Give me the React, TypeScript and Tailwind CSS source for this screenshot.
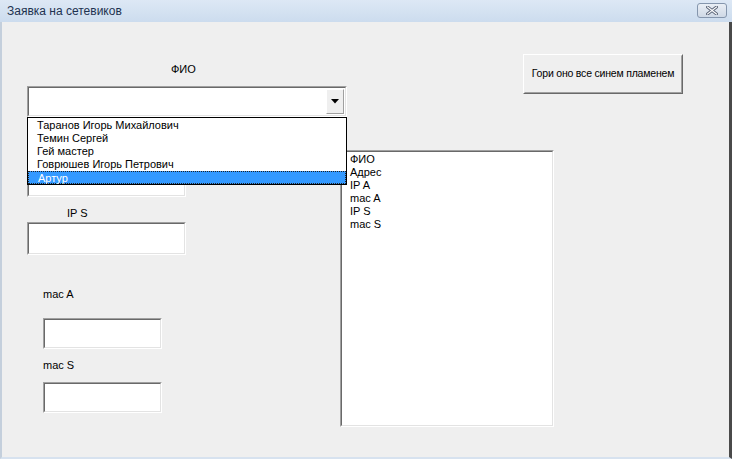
import React from 'react';

const fioOptions = [
  'Таранов Игорь Михайлович',
  'Темин Сергей',
  'Гей мастер',
  'Говрюшев Игорь Петрович',
  'Артур',
];

const fields = ['ФИО', 'Адрес', 'IP A', 'mac A', 'IP S', 'mac S'];

// sunken 3d box, like the old win32 edit control
const Sunken: React.FC<{ className?: string; children?: React.ReactNode }> = ({ className = '', children }) => (
  <div className={`shrink-0 border border-t-[#a0a0a0] border-l-[#a0a0a0] border-b-white border-r-white ${className}`}>
    <div className="h-full w-full border border-t-[#696969] border-l-[#696969] border-b-[#e3e3e3] border-r-[#e3e3e3] bg-white">
      {children}
    </div>
  </div>
);

const Label: React.FC<{ className?: string; children: React.ReactNode }> = ({ className = '', children }) => (
  <div className={`h-[13px] leading-[13px] text-[11px] text-black ${className}`}>{children}</div>
);

export default function App() {
  return (
    <div
      className="relative flex h-[459px] w-[732px] flex-col overflow-hidden bg-[#efefef]"
      style={{ fontFamily: '"Liberation Sans", Arial, sans-serif' }}
    >
      {/* Title bar */}
      <div className="flex h-[22px] shrink-0 items-center justify-between bg-gradient-to-b from-[#dde8f5] to-[#ccdcee] pl-[7px] pr-[5px]">
        <span className="text-[12px] text-[#1e3250]">Заявка на сетевиков</span>
        <div className="mb-[2px] flex h-[15px] w-[30px] items-center justify-center rounded-[3px] border border-[#8596ad] bg-gradient-to-b from-[#e9eef5] to-[#cfd9e6]">
          <svg width="12" height="9" viewBox="0 0 12 9">
            <path d="M1.5 1 L10.5 8 M10.5 1 L1.5 8" stroke="#5b6578" strokeWidth="3" strokeLinecap="square" />
            <path d="M1.5 1 L10.5 8 M10.5 1 L1.5 8" stroke="#ffffff" strokeWidth="1.2" strokeLinecap="square" />
          </svg>
        </div>
      </div>

      {/* Form body */}
      <div className="flex flex-1 border-l-[2px] border-r-[3px] border-b-[2px] border-l-[#c4cfdc] border-r-[#4a4a4a] border-b-[#d7e2ef]">
        {/* Left column */}
        <div className="ml-[25px] flex w-[313px] shrink-0 flex-col">
          <Label className="ml-[144px] mt-[41px]">ФИО</Label>

          <div className="relative z-10 mt-[10px]">
            <Sunken className="h-[31px] w-[320px]">
              <div className="flex h-full justify-end p-[1px]">
                <div className="flex h-full w-[18px] items-center justify-center border border-t-white border-l-white border-b-[#a0a0a0] border-r-[#a0a0a0] bg-[#efefef]">
                  <svg width="8" height="5" viewBox="0 0 8 5">
                    <path d="M0 0 H8 L4 4.5 Z" fill="#000" />
                  </svg>
                </div>
              </div>
            </Sunken>

            {/* open dropdown list */}
            <div className="absolute left-0 top-[31px] w-[320px] border border-black bg-white pt-[1px]">
              {fioOptions.map((o, i) => (
                <div
                  key={o}
                  className={`h-[13px] pl-[9px] text-[11px] leading-[13px] ${
                    i === fioOptions.length - 1
                      ? 'border border-dotted border-[#222] bg-[#3399ff] pl-[8px] leading-[11px] text-white'
                      : 'text-black'
                  }`}
                >
                  {o}
                </div>
              ))}
            </div>
          </div>

          <Sunken className="mt-[48px] h-[32px] w-[159px]" />

          <Label className="ml-[40px] mt-[10px]">IP S</Label>
          <Sunken className="mt-[2px] h-[33px] w-[159px]" />

          <Label className="ml-[16px] mt-[33px]">mac A</Label>
          <Sunken className="ml-[16px] mt-[17px] h-[31px] w-[119px]" />

          <Label className="ml-[16px] mt-[10px]">mac S</Label>
          <Sunken className="ml-[16px] mt-[10px] h-[31px] w-[119px]" />
        </div>

        {/* Right part */}
        <div className="flex flex-col">
          <button className="ml-[183px] mt-[32px] flex h-[40px] w-[160px] shrink-0 items-center justify-center border border-t-white border-l-white border-b-[#696969] border-r-[#696969] bg-[#efefef] text-[10.5px] tracking-[-0.2px] text-black">
            <span className="flex h-full w-full items-center justify-center border border-t-[#efefef] border-l-[#efefef] border-b-[#a0a0a0] border-r-[#a0a0a0]">
              Гори оно все синем пламенем
            </span>
          </button>

          <Sunken className="mt-[56px] h-[277px] w-[214px]">
            <div className="pl-[8px] pt-[1px]">
              {fields.map((f) => (
                <div key={f} className="h-[13px] text-[11px] leading-[13px] text-black">
                  {f}
                </div>
              ))}
            </div>
          </Sunken>
        </div>
      </div>
    </div>
  );
}
